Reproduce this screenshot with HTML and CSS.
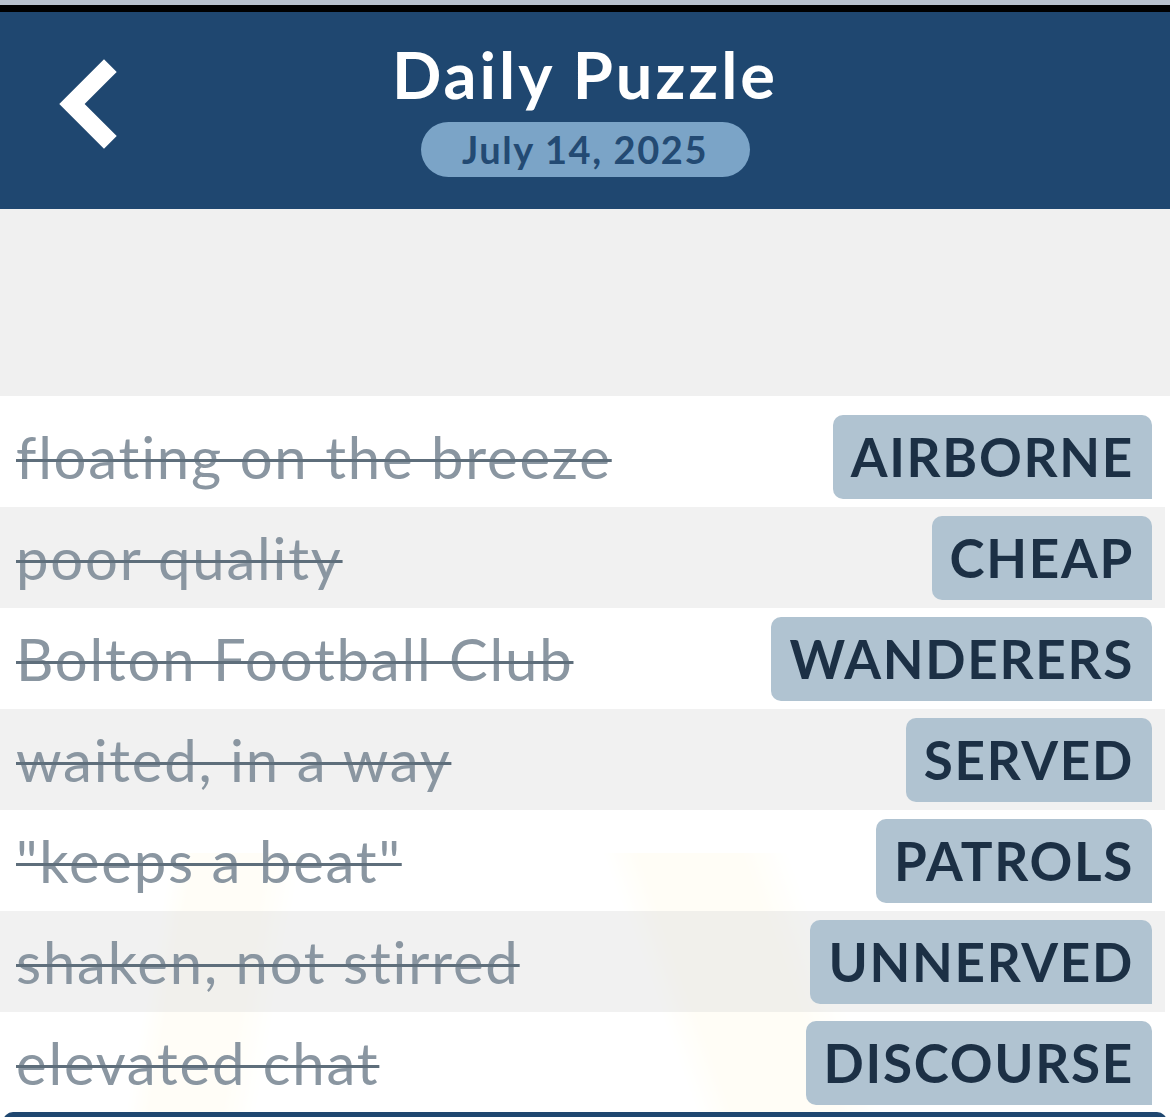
FILE: index.html
```html
<!DOCTYPE html>
<html lang="en">
<head>
<meta charset="utf-8">
<title>Daily Puzzle</title>
<link rel="stylesheet" href="styles.css">
</head>
<body>
<div class="status-strip"></div>
<div class="status-black"></div>
<header class="header">
  <div class="back">
    <svg width="70" height="100" viewBox="0 0 70 100" aria-hidden="true">
      <polyline points="50,17 18,49 50,81" fill="none" stroke="#ffffff" stroke-width="18" stroke-linejoin="miter" stroke-linecap="square"/>
    </svg>
  </div>
  <div class="title-block">
    <h1 class="title">Daily Puzzle</h1>
    <div class="date-pill">July 14, 2025</div>
  </div>
  <div class="spacer-col"></div>
</header>
<div class="gap-area"></div>
<main class="list">
  <div class="rays"></div>
  <div class="row row-white"><span class="clue">floating on the breeze</span><span class="chip">AIRBORNE</span></div>
  <div class="row row-gray"><span class="clue">poor quality</span><span class="chip">CHEAP</span></div>
  <div class="row row-white"><span class="clue">Bolton Football Club</span><span class="chip">WANDERERS</span></div>
  <div class="row row-gray"><span class="clue">waited, in a way</span><span class="chip">SERVED</span></div>
  <div class="row row-white"><span class="clue">"keeps a beat"</span><span class="chip">PATROLS</span></div>
  <div class="row row-gray"><span class="clue">shaken, not stirred</span><span class="chip">UNNERVED</span></div>
  <div class="row row-white"><span class="clue">elevated chat</span><span class="chip">DISCOURSE</span></div>
</main>
<div class="bottom-bar"></div>
</body>
</html>
```

FILE: styles.css
```css
* { box-sizing: border-box; }
html, body { margin: 0; padding: 0; }
body {
  width: 1170px;
  height: 1117px;
  overflow: hidden;
  background: #ffffff;
  font-family: "Lato", "Noto Sans", sans-serif;
}
.status-strip { height: 5px; background: #b8c1cd; }
.status-black { height: 7px; background: #000000; }
.header {
  height: 197px;
  background: #1f4770;
  display: grid;
  grid-template-columns: 1fr auto 1fr;
  align-items: start;
}
.back {
  padding-left: 54px;
  padding-top: 43px;
}
.back svg { display: block; }
.title-block {
  display: flex;
  flex-direction: column;
  align-items: center;
  padding-top: 24px;
}
.title {
  margin: 0;
  color: #ffffff;
  font-weight: 700;
  font-size: 65px;
  line-height: 76px;
  letter-spacing: 3px;
}
.date-pill {
  margin-top: 10px;
  width: 329px;
  height: 55px;
  border-radius: 28px;
  background: #7ba4c7;
  color: #234a73;
  font-weight: 700;
  font-size: 38px;
  line-height: 55px;
  text-align: center;
  letter-spacing: 1.6px;
}
.gap-area {
  height: 187px;
  background: #f0f0f0;
}
.list {
  position: relative;
  padding-top: 10px;
  background: #ffffff;
}
.row {
  position: relative;
  z-index: 1;
  height: 101px;
  width: 1165px;
  display: flex;
  align-items: center;
  justify-content: space-between;
  padding-left: 16px;
  padding-right: 13px;
}
.row-white { background: rgba(255,255,255,0.86); }
.row-gray { background: rgba(240,240,240,0.9); }
.clue {
  color: #8a96a1;
  font-size: 58px;
  font-weight: 400;
  letter-spacing: 1.8px;
  text-decoration: line-through;
  text-decoration-color: #5e6e7b;
  text-decoration-thickness: 3px;
  white-space: nowrap;
}
.chip {
  height: 84px;
  display: flex;
  align-items: center;
  padding: 0 18px;
  background: #b0c3d1;
  color: #1c3045;
  font-weight: 700;
  font-size: 53px;
  border-radius: 10px 10px 0 10px;
  letter-spacing: 1.7px;
}
.rays {
  position: absolute;
  left: 0; right: 0; bottom: 0;
  height: 260px;
  z-index: 0;
  background:
    linear-gradient(100deg, transparent 14%, rgba(255,214,90,0.35) 16%, rgba(255,214,90,0.35) 22%, transparent 25%),
    linear-gradient(70deg, transparent 55%, rgba(255,214,90,0.4) 58%, rgba(255,214,90,0.4) 66%, transparent 70%);
}
.bottom-bar {
  height: 10px;
  margin: -1px 3px 0 3px;
  position: relative;
  z-index: 2;
  background: #1f4770;
  border-radius: 12px 12px 0 0;
}
```
